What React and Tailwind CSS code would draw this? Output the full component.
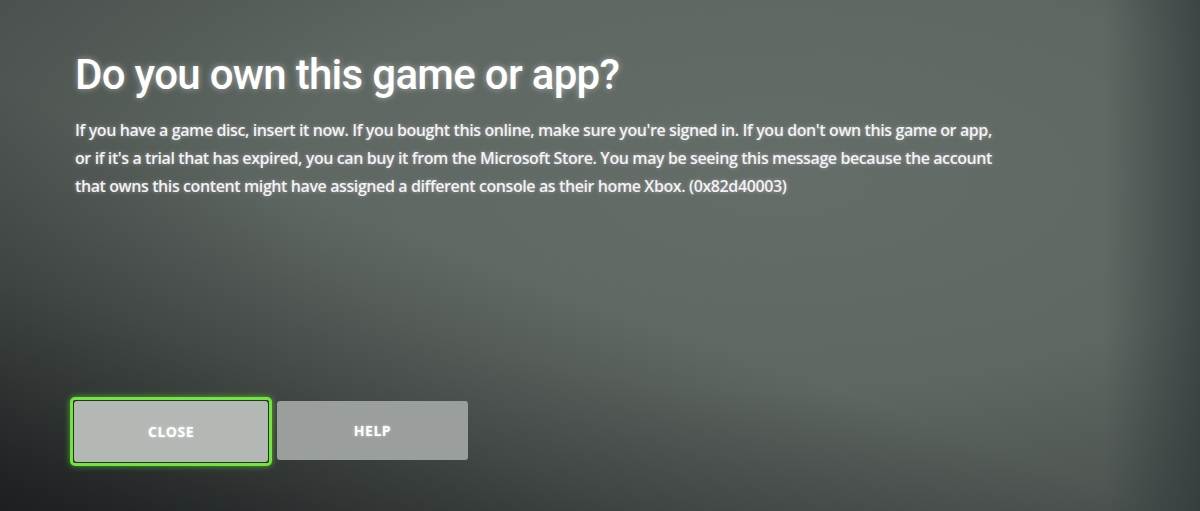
export default function App() {
  return (
    <div
      className="relative w-[1200px] h-[511px] overflow-hidden bg-[#5f6661] text-white"
      style={{ fontFamily: '"Open Sans", "Noto Sans", sans-serif' }}
    >
      <div className="absolute inset-0 bg-[radial-gradient(ellipse_at_65%_35%,#656d68_0%,#5f6762_45%,#4a514e_80%,#2f3434_100%)]" />
      <div className="absolute inset-0 bg-[linear-gradient(20deg,rgba(25,28,29,0.85)_0%,rgba(40,44,44,0.4)_25%,rgba(0,0,0,0)_45%)]" />
      <div className="absolute inset-0 bg-[linear-gradient(90deg,rgba(0,0,0,0)_92%,rgba(40,50,52,0.6)_100%)]" />

      <div className="relative flex flex-col h-full pl-[75px]">
        <h1
          className="mt-[47px] text-[42px] leading-[56px] font-medium tracking-[-0.7px] [text-shadow:0_0_6px_rgba(255,255,255,0.45)]"
          style={{ fontFamily: 'Roboto, "Noto Sans", sans-serif' }}
        >
          Do you own this game or app?
        </h1>
        <p className="mt-[13px] text-[16px] leading-[28px] font-semibold tracking-[-0.4px] text-[#f4f2f6] [text-shadow:0_0_4px_rgba(255,255,255,0.4)]">
          If you have a game disc, insert it now. If you bought this online, make sure you're signed in. If you don't own this game or app,
          <br />
          or if it's a trial that has expired, you can buy it from the Microsoft Store. You may be seeing this message because the account
          <br />
          that owns this content might have assigned a different console as their home Xbox. (0x82d40003)
        </p>

        <div className="mt-[197px] -ml-[5px] flex items-start gap-[5px]">
          <div className="rounded-[5px] border-[3px] border-[#6ee83a] shadow-[0_0_6px_rgba(110,232,58,0.6)] p-[1px] bg-[#2a2e2c]">
            <button className="w-[194px] h-[61px] rounded-[3px] bg-[#b4b8b5] text-[14px] font-bold tracking-[0.5px] [text-shadow:0_0_3px_rgba(255,255,255,0.6)]">
              CLOSE
            </button>
          </div>
          <button className="mt-[4px] w-[191px] h-[59px] rounded-[3px] bg-[#9a9e9c] text-[14px] font-bold tracking-[0.5px] [text-shadow:0_0_3px_rgba(255,255,255,0.6)]">
            HELP
          </button>
        </div>
      </div>
    </div>
  );
}
